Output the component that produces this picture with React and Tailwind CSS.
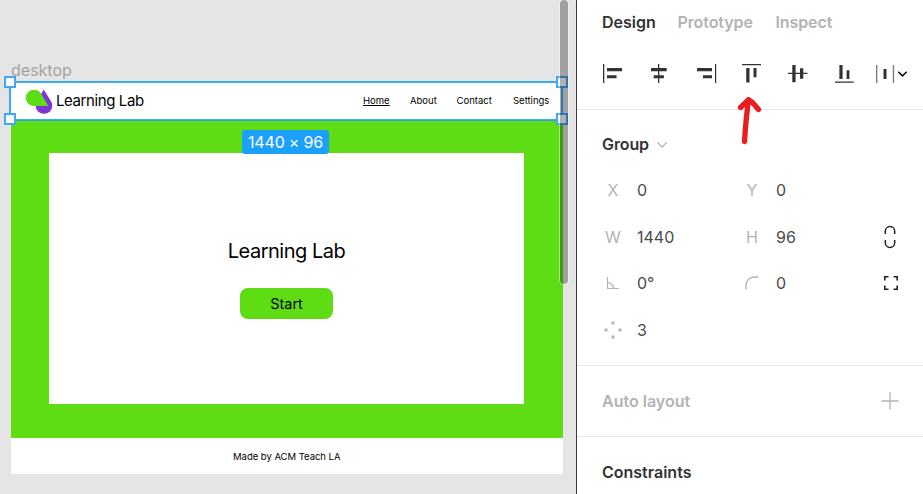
const ALIGN_ICONS = [
  { name: 'Align left', box: '600 60 24 28', d: 'M603 64h1.3v19h-1.3zM607 68h15v3.3h-15zM607 75.2h9.5v3.1h-9.5z' },
  { name: 'Align horizontal centers', box: '647 60 24 28', d: 'M658 64h1.3v19h-1.3zM651 68h15.7v3.2h-15.7zM653.7 75.3h10.2v3h-10.2z' },
  { name: 'Align right', box: '694 60 24 28', d: 'M715 64h1.2v19h-1.2zM697 68h15v3.2h-15zM703 75.3h9v3h-9z' },
  { name: 'Align top', box: '741 60 24 28', d: 'M742 64h19v1.3h-19zM746.2 68h3.3v14.5h-3.3zM753.5 68h3v9.3h-3z' },
  { name: 'Align vertical centers', box: '788 60 24 28', d: 'M788 72.7h19.5v1.3h-19.5zM792.3 65h3.3v17.3h-3.3zM800 68.3h3.3v10.4h-3.3z' },
  { name: 'Align bottom', box: '835 60 24 28', d: 'M835 81.5h18.7v1.3h-18.7zM839.4 65h3.2v14h-3.2zM846.6 70.2h2.8v8.8h-2.8z' },
]

function AlignBar() {
  return (
    <div className="flex h-[67px] shrink-0 items-start border-b border-[#e5e5e5] pt-[17px] pl-[23px] text-[#333]">
      <div className="flex gap-[23px]">
        {ALIGN_ICONS.map((icon) => (
          <svg key={icon.name} aria-label={icon.name} viewBox={icon.box} width="24" height="28" fill="currentColor" className="shrink-0">
            <path d={icon.d} />
          </svg>
        ))}
      </div>
      <svg aria-label="Distribute" viewBox="874 60 36 28" width="36" height="28" className="ml-[15px] shrink-0">
        <path d="M876 65h1.3v18h-1.3zM892.8 65h1.3v18h-1.3z" fill="#777" />
        <path d="M883.5 69h3v10h-3z" fill="#333" />
        <path d="M898.3 71.7l4.2 4.2 4.2-4.2" fill="none" stroke="#111" strokeWidth="1.5" />
      </svg>
    </div>
  )
}

function Field({ label, value }) {
  return (
    <div className="flex w-[139px] items-center">
      <div className="flex w-[22px] justify-center text-[#b3b3b3]">{label}</div>
      <div className="ml-[13px] text-[#4a4a4a]">{value}</div>
    </div>
  )
}

function Row({ children }) {
  return <div className="flex h-[46.5px] shrink-0 items-center pl-[25px]">{children}</div>
}

const rotation = (
  <svg width="14" height="14" viewBox="0 0 14 14" fill="none" stroke="#b3b3b3" strokeWidth="1.2">
    <path d="M1.5 1v11.5H13M1.5 6.5a6 6 0 0 1 6 6" />
  </svg>
)
const radius = (
  <svg width="14" height="14" viewBox="0 0 14 14" fill="none" stroke="#b3b3b3" strokeWidth="1.3">
    <path d="M1 13.5V9a8 8 0 0 1 8-8h4.5" />
  </svg>
)
const count = (
  <svg width="18" height="18" viewBox="0 0 18 18" fill="#b3b3b3">
    <path d="M7.5 .5h3v3h-3zM7.5 14.5h3v3h-3zM.5 7.5h3v3h-3zM14.5 7.5h3v3h-3z" />
  </svg>
)

function Inspector() {
  return (
    <aside className="relative flex w-[347px] shrink-0 flex-col border-l border-[#3a3a3a] bg-white text-[16px] text-[#333]">
      <nav className="flex h-[43px] shrink-0 items-center pl-[25px] font-semibold text-[#b3b3b3]">
        <span className="w-[75.5px] text-[#333]">Design</span>
        <span className="w-[98px] tracking-[-0.1px]">Prototype</span>
        <span className="tracking-[-0.1px]">Inspect</span>
      </nav>
      <AlignBar />
      <svg viewBox="735 94 30 54" width="30" height="54" className="absolute left-[158px] top-[94px]" fill="none" stroke="#eb1c1f" strokeWidth="5.3" strokeLinecap="round" strokeLinejoin="round">
        <path d="M748.5 99.7Q746 118 744.5 141.5M740.5 107.5L748.5 99.7M748.5 99.7L752.5 102.5 758.5 109.5" />
      </svg>

      <section className="flex h-[256px] shrink-0 flex-col border-b border-[#e5e5e5] pt-[10px]">
        <div className="flex h-[47px] shrink-0 items-center pl-[25px] font-semibold tracking-[-0.1px]">
          Group
          <svg width="12" height="8" viewBox="0 0 12 8" className="ml-[7px] mt-[3px]" fill="none" stroke="#b3b3b3" strokeWidth="1.3">
            <path d="M1.5 1.5L6 6l4.5-4.5" />
          </svg>
        </div>
        <Row><Field label="X" value="0" /><Field label="Y" value="0" /></Row>
        <Row>
          <Field label="W" value="1440" />
          <Field label="H" value="96" />
          <svg width="14" height="24" viewBox="0 0 14 24" fill="none" stroke="#222" strokeWidth="1.5" className="ml-[3px]">
            <path d="M2.3 9V6.3a4.7 4.7 0 0 1 9.4 0V9M2.3 15v2.7a4.7 4.7 0 0 0 9.4 0V15" />
          </svg>
        </Row>
        <Row>
          <Field label={rotation} value="0°" />
          <Field label={radius} value="0" />
          <svg width="16" height="16" viewBox="0 0 16 16" fill="none" stroke="#222" strokeWidth="1.6" className="ml-[3px]">
            <path d="M1.8 5.5V1.8H5.5M10.5 1.8H14.2V5.5M14.2 10.5V14.2H10.5M5.5 14.2H1.8V10.5" />
          </svg>
        </Row>
        <Row><Field label={count} value="3" /></Row>
      </section>

      <section className="flex h-[71px] shrink-0 items-center justify-between border-b border-[#e5e5e5] pl-[25px] pr-[24px] font-semibold text-[#b3b3b3]">
        Auto layout
        <svg width="18" height="18" viewBox="0 0 18 18" stroke="#b3b3b3" strokeWidth="1.3"><path d="M9 .5v17M.5 9h17" /></svg>
      </section>
      <section className="flex h-[70px] shrink-0 items-center pl-[25px] font-semibold">Constraints</section>
    </aside>
  )
}

function Handle({ place }) {
  return <span className={`absolute size-[12px] border-2 border-[#3fa9f8] bg-white ${place}`} />
}

function Frame() {
  return (
    <div className="relative ml-[11px] flex h-[392px] w-[551.5px] flex-col bg-white text-black">
      <header className="flex h-[38px] items-center">
        <svg width="30" height="28" viewBox="24 87 30 28" className="ml-[13px] shrink-0">
          <path d="M43.7 89.5L51.2 101.5A8.3 8.3 0 1 1 36.6 101.7Z" fill="#7f35d6" />
          <path d="M34 89.7A8.2 8.2 0 0 0 34 106.1H48.3L41.3 94A8.2 8.2 0 0 0 34 89.7Z" fill="#5edc14" />
        </svg>
        <span className="ml-[2px] w-[307px] text-[15px] tracking-[-0.4px]">Learning Lab</span>
        <nav className="flex shrink-0 text-[9.5px]">
          <span className="w-[47px] underline decoration-1 underline-offset-1">Home</span>
          <span className="w-[46.5px]">About</span>
          <span className="w-[56.5px]">Contact</span>
          <span>Settings</span>
        </nav>
      </header>
      <main className="h-[317.5px] shrink-0 bg-[#5edc14] pb-[33.5px] pl-[38px] pr-[38.5px] pt-[33.3px]">
        <div className="flex h-full flex-col items-center bg-white pt-[84px]">
          <h1 className="h-[28px] text-[20px] leading-[28px] tracking-[-0.5px]">Learning Lab</h1>
          <button className="mt-[23px] h-[31px] w-[93px] rounded-[8px] bg-[#5edc14] text-[14.5px]">Start</button>
        </div>
      </main>
      <footer className="flex flex-1 items-center justify-center pt-[2px] text-[9.5px] tracking-[-0.03px]">Made by ACM Teach LA</footer>
      <div className="absolute left-[-2px] top-[-1px] h-[39.5px] w-[554px] border-2 border-[#1b9cf5]/85">
        <Handle place="-left-[7px] -top-[7px]" />
        <Handle place="-right-[7px] -top-[7px]" />
        <Handle place="-left-[7px] -bottom-[6px]" />
        <Handle place="-right-[7px] -bottom-[6px]" />
      </div>
      <span className="absolute left-[231px] top-[48px] flex h-[24px] w-[87px] items-center justify-center rounded-[3px] bg-[#1ba0fb] text-[16px] tracking-[-0.2px] text-white">1440 × 96</span>
    </div>
  )
}

export default function App() {
  return (
    <div className="flex h-[494px] w-[923px] overflow-hidden bg-[#e5e5e5] font-['Inter',sans-serif]">
      <div className="relative w-[576px] shrink-0">
        <div className="flex h-[82px] items-end pb-[1px] pl-[11px] text-[16px] leading-[22px] text-[#a3a3a3]">desktop</div>
        <Frame />
        <div className="absolute left-[559px] top-[-1px] h-[286px] w-[10px] rounded-full border border-white/40 bg-black/30 bg-clip-padding" />
      </div>
      <Inspector />
    </div>
  )
}
